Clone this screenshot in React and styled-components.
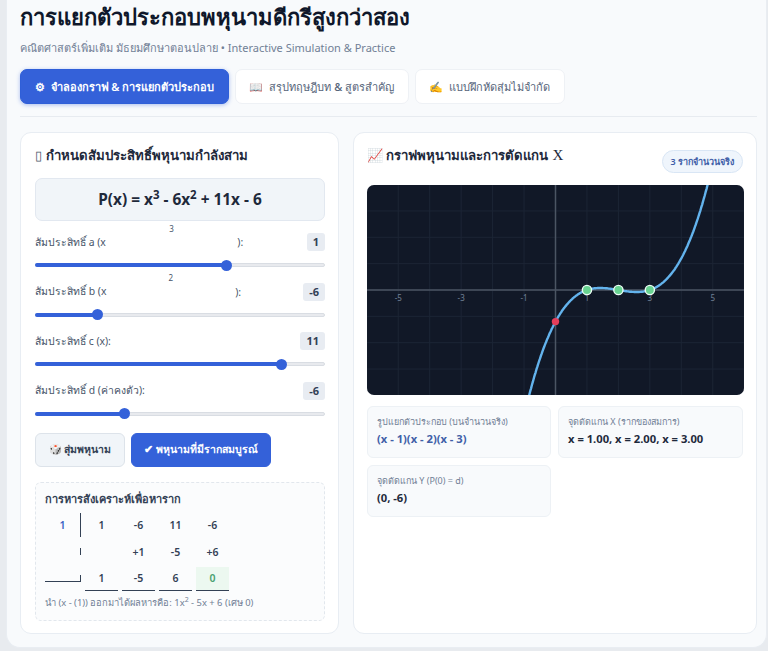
import React from "react";
import styled, { createGlobalStyle } from "styled-components";

const Global = createGlobalStyle`
  html, body { margin: 0; padding: 0; background: #e8ebef; }
  body { font-family: "Noto Sans", "Inter", sans-serif; color: #1e293b; }
  * { box-sizing: border-box; }
`;

const Page = styled.div`
  width: 761px; height: 648px; margin-left: 6px; background: #f8fafc;
  border-radius: 0 0 14px 14px; padding: 0 9px 0 13px;
  border: 1px solid #e9edf2; border-top: none; overflow: hidden;
`;
const Title = styled.h1`
  margin: 0; font-family: "Liberation Serif", serif; font-size: 22px; line-height: 36px; font-weight: 700; color: #0f172a;
`;
const Subtitle = styled.p`
  margin: 3px 0 0; font-size: 11px; line-height: 18px; color: #718096;
`;
const Tabs = styled.nav`
  display: flex; gap: 6px; margin-top: 12px; padding-bottom: 12px; border-bottom: 1px solid #e7ebf0; align-items: center;
`;
const Tab = styled.button`
  height: 35px; padding: 0 13.5px; border-radius: 7px; font: ${p => p.$active ? 600 : 500} 11px "Noto Sans", sans-serif;
  border: 1px solid ${p => p.$active ? "#2f5fd8" : "#eef1f5"};
  background: ${p => p.$active ? "#3461d9" : "#fff"};
  color: ${p => p.$active ? "#fff" : "#56657a"};
  box-shadow: ${p => p.$active ? "0 1px 4px rgba(52,97,217,.4)" : "none"};
  display: flex; align-items: center; gap: 6px; white-space: nowrap;
`;
const Columns = styled.div`
  display: grid; grid-template-columns: 319px 404px; gap: 14px; margin-top: 15px;
`;
const Panel = styled.section`
  background: #fff; border: 1px solid #e8edf3; border-radius: 11px; height: 502px;
  padding: 13px 13px 13px ${p => p.$padLeft}px;
`;
const PanelHead = styled.div`
  display: flex; justify-content: space-between; align-items: flex-start; height: 39px;
`;
const PanelTitle = styled.h3`
  margin: -1px 0 0; font-size: 13.2px; line-height: 20px; font-weight: 700; color: #1e293b; font-family: "Liberation Serif", serif;
`;
const Glyph = styled.span`
  font-family: "Noto Sans", sans-serif; font-weight: 400; color: #475569; font-size: 13px; margin-right: 1px;
`;
const AxisLetter = styled.span`
  font-size: 15px; font-weight: 400; margin-left: 1px;
`;
const Badge = styled.span`
  margin-top: 4px; height: 23px; padding: 0 8px; border-radius: 12px; background: #eff5fc; border: 1px solid #d9e6f5;
  color: #3f5fa8; font-size: 9px; font-weight: 600; display: flex; align-items: center;
`;
const Formula = styled.div`
  height: 43px; background: #f1f5f9; border: 1px solid #e2e8f0; border-radius: 7px; display: flex; align-items: center; justify-content: center;
  font-size: 15.4px; font-weight: 700; color: #1e293b; margin-top: -7px;
  sup { font-size: 11.5px; line-height: 0; }
`;
const Control = styled.div`
  margin-top: ${p => p.$first ? 12 : 15.5}px;
`;
const LabelRow = styled.label`
  display: flex; justify-content: space-between; align-items: center; font-size: 10.4px; color: #475569; height: 18px;
  sup { font-size: 8px; margin-top: -28px; }
`;
const Value = styled.span`
  background: #e8ecf2; border-radius: 3px; padding: 0 6px; font-size: 11px; font-weight: 700; color: #334155; line-height: 18px; min-width: 17px; text-align: center;
`;
const Slider = styled.div`
  position: relative; height: 4px; margin-top: 12px; background: #e8eaee; border-radius: 2px; border: 1px solid #d9dde3;
`;
const Fill = styled.div`
  position: absolute; left: -1px; top: -1px; height: 4px; background: #3461d9; border-radius: 2px;
`;
const Thumb = styled.span`
  position: absolute; top: -4.5px; width: 11px; height: 11px; margin-left: -5.5px; border-radius: 50%; background: #3461d9;
`;
const Buttons = styled.div`
  display: flex; gap: 6px; margin-top: 17px;
`;
const Btn = styled.button`
  height: 34px; padding: 0 12.5px; border-radius: 6px; font: 600 10.5px "Noto Sans", sans-serif; white-space: nowrap;
  background: ${p => p.$primary ? "#3461d9" : "#f1f5f9"};
  color: ${p => p.$primary ? "#fff" : "#334155"};
  border: 1px solid ${p => p.$primary ? "#3461d9" : "#dde3ea"};
`;
const Synth = styled.div`
  margin-top: 15px; height: 139px; border: 1px dashed #e2e7ed; border-radius: 6px; background: #fbfcfd; padding: 8px 9px;
`;
const SynthTitle = styled.div`
  font-size: 11px; font-weight: 700; color: #334155; line-height: 16px;
`;
const SynthGrid = styled.div`
  display: grid; grid-template-columns: 36px repeat(4, 33px); grid-auto-rows: 24px; gap: 3px 4px; margin-top: 6px;
`;
const Cell = styled.div`
  display: flex; align-items: center; justify-content: center; font-size: 10.5px; font-weight: 600; color: ${p => p.$green ? "#48a06f" : "#334155"};
  background: ${p => p.$green ? "#ecf8f0" : "transparent"};
  ${p => p.$under ? "border-bottom: 1px solid #334155;" : ""}
`;
const DivisorCell = styled.div`
  display: flex; align-items: center; justify-content: center; font-size: 10.5px; font-weight: 600;
  border-right: 1px solid #334155; height: 100%;
  span { color: #3b62c4; }
`;
const Stub = styled.div`
  align-self: center; height: 7px; border-right: 1px solid #334155;
  ${p => p.$foot ? "border-bottom: 1px solid #334155;" : ""}
`;
const SynthNote = styled.div`
  font-size: 9.4px; color: #718096; margin-top: 5px; line-height: 14px;
  sup { font-size: 7px; line-height: 0; }
`;
const Chart = styled.svg`
  display: block; width: 377px; height: 210px; border-radius: 7px; background: #111827;
`;
const Cards = styled.div`
  display: grid; grid-template-columns: 184px 185px; gap: 7px; margin-top: 11px;
`;
const Card = styled.div`
  height: 52px; background: #f8fafc; border: 1px solid #edf1f5; border-radius: 6px; padding: 8px 9px;
`;
const CardLabel = styled.div`
  font-size: 9px; color: #718096; line-height: 13px;
`;
const CardValue = styled.div`
  font-size: 11.2px; font-weight: 700; line-height: 18px; margin-top: 2px; color: ${p => p.$blue ? "#3f5fa8" : "#1e293b"};
`;

const sliders = [
  { label: ["สัมประสิทธิ์ a (x", "3", "):"], v: 1, min: -3, max: 3 },
  { label: ["สัมประสิทธิ์ b (x", "2", "):"], v: -6, min: -10, max: 10 },
  { label: ["สัมประสิทธิ์ c (x):"], v: 11, min: -15, max: 15 },
  { label: ["สัมประสิทธิ์ d (ค่าคงตัว):"], v: -6, min: -15, max: 15 },
];

const W = 377, H = 210, U = 31.45, YU = 5.27;
const sx = x => 188.5 + x * U;
const sy = y => 105 - y * YU;
const f = x => x * x * x - 6 * x * x + 11 * x - 6;
let curve = "";
for (let x = -1.2; x <= 5; x += 0.02) curve += (curve ? "L" : "M") + sx(x).toFixed(1) + " " + sy(f(x)).toFixed(1);

function Graph() {
  const vs = [], hs = [];
  for (let i = -6; i <= 6; i++) vs.push(i);
  for (let i = -20; i <= 20; i += 5) hs.push(i);
  return (
    <Chart viewBox={`0 0 ${W} ${H}`}>
      {vs.map(i => <line key={i} x1={sx(i)} x2={sx(i)} y1="0" y2={H} stroke="#1c2535" strokeWidth="1" />)}
      {hs.map(i => <line key={i} y1={sy(i)} y2={sy(i)} x1="0" x2={W} stroke="#1c2535" strokeWidth="1" />)}
      <line x1={sx(0)} x2={sx(0)} y1="0" y2={H} stroke="#4b5563" strokeWidth="1.5" />
      <line y1={sy(0)} y2={sy(0)} x1="0" x2={W} stroke="#4b5563" strokeWidth="1.5" />
      {[-5, -3, -1, 1, 3, 5].map(i => <text key={i} x={sx(i)} y={sy(0) + 11} fontSize="8" textAnchor="middle" fill="#718096" fontFamily="Noto Sans">{i}</text>)}
      <path d={curve} fill="none" stroke="#63b3ed" strokeWidth="2.4" />
      <circle cx={sx(0)} cy={sy(-6)} r="3.7" fill="#e53e5a" />
      {[1, 2, 3].map(i => <circle key={i} cx={sx(i)} cy={sy(0)} r="4.6" fill="#68d391" stroke="#ecfdf5" strokeWidth="1.4" />)}
    </Chart>
  );
}

export default function App() {
  return (
    <Page>
      <Global />
      <Title>การแยกตัวประกอบพหุนามดีกรีสูงกว่าสอง</Title>
      <Subtitle>คณิตศาสตร์เพิ่มเติม มัธยมศึกษาตอนปลาย • Interactive Simulation &amp; Practice</Subtitle>
      <Tabs>
        <Tab $active>⚙ <span>จำลองกราฟ &amp; การแยกตัวประกอบ</span></Tab>
        <Tab>📖 <span>สรุปทฤษฎีบท &amp; สูตรสำคัญ</span></Tab>
        <Tab>✍️ <span>แบบฝึกหัดสุ่มไม่จำกัด</span></Tab>
      </Tabs>
      <Columns>
        <Panel $padLeft={14}>
          <PanelHead><PanelTitle><Glyph>▯</Glyph> กำหนดสัมประสิทธิ์พหุนามกำลังสาม</PanelTitle></PanelHead>
          <Formula><span>P(x) = x<sup>3</sup> - 6x<sup>2</sup> + 11x - 6</span></Formula>
          {sliders.map((s, i) => {
            const pct = (s.v - s.min) / (s.max - s.min);
            return (
              <Control key={i} $first={i === 0}>
                <LabelRow>
                  <span>{s.label[0]}</span>
                  {s.label[1] && <sup>{s.label[1]}</sup>}
                  {s.label[2] && <span>{s.label[2]}</span>}
                  <Value>{s.v}</Value>
                </LabelRow>
                <Slider>
                  <Fill style={{ width: 7 + pct * 276 }} />
                  <Thumb style={{ left: 6 + pct * 276 }} />
                </Slider>
              </Control>
            );
          })}
          <Buttons>
            <Btn>🎲 สุ่มพหุนาม</Btn>
            <Btn $primary>✔ พหุนามที่มีรากสมบูรณ์</Btn>
          </Buttons>
          <Synth>
            <SynthTitle>การหารสังเคราะห์เพื่อหาราก</SynthTitle>
            <SynthGrid>
              <DivisorCell><span>1</span></DivisorCell><Cell>1</Cell><Cell>-6</Cell><Cell>11</Cell><Cell>-6</Cell>
              <Stub /><Cell></Cell><Cell>+1</Cell><Cell>-5</Cell><Cell>+6</Cell>
              <Stub $foot /><Cell $under>1</Cell><Cell $under>-5</Cell><Cell $under>6</Cell><Cell $under $green>0</Cell>
            </SynthGrid>
            <SynthNote>นำ (x - (1)) ออกมาได้ผลหารคือ: 1x<sup>2</sup> - 5x + 6 (เศษ 0)</SynthNote>
          </Synth>
        </Panel>
        <Panel $padLeft={13}>
          <PanelHead>
            <PanelTitle>📈 กราฟพหุนามและการตัดแกน <AxisLetter>X</AxisLetter></PanelTitle>
            <Badge>3 รากจำนวนจริง</Badge>
          </PanelHead>
          <Graph />
          <Cards>
            <Card><CardLabel>รูปแยกตัวประกอบ (บนจำนวนจริง)</CardLabel><CardValue $blue>(x - 1)(x - 2)(x - 3)</CardValue></Card>
            <Card><CardLabel>จุดตัดแกน X (รากของสมการ)</CardLabel><CardValue>x = 1.00, x = 2.00, x = 3.00</CardValue></Card>
            <Card><CardLabel>จุดตัดแกน Y (P(0) = d)</CardLabel><CardValue>(0, -6)</CardValue></Card>
          </Cards>
        </Panel>
      </Columns>
    </Page>
  );
}
